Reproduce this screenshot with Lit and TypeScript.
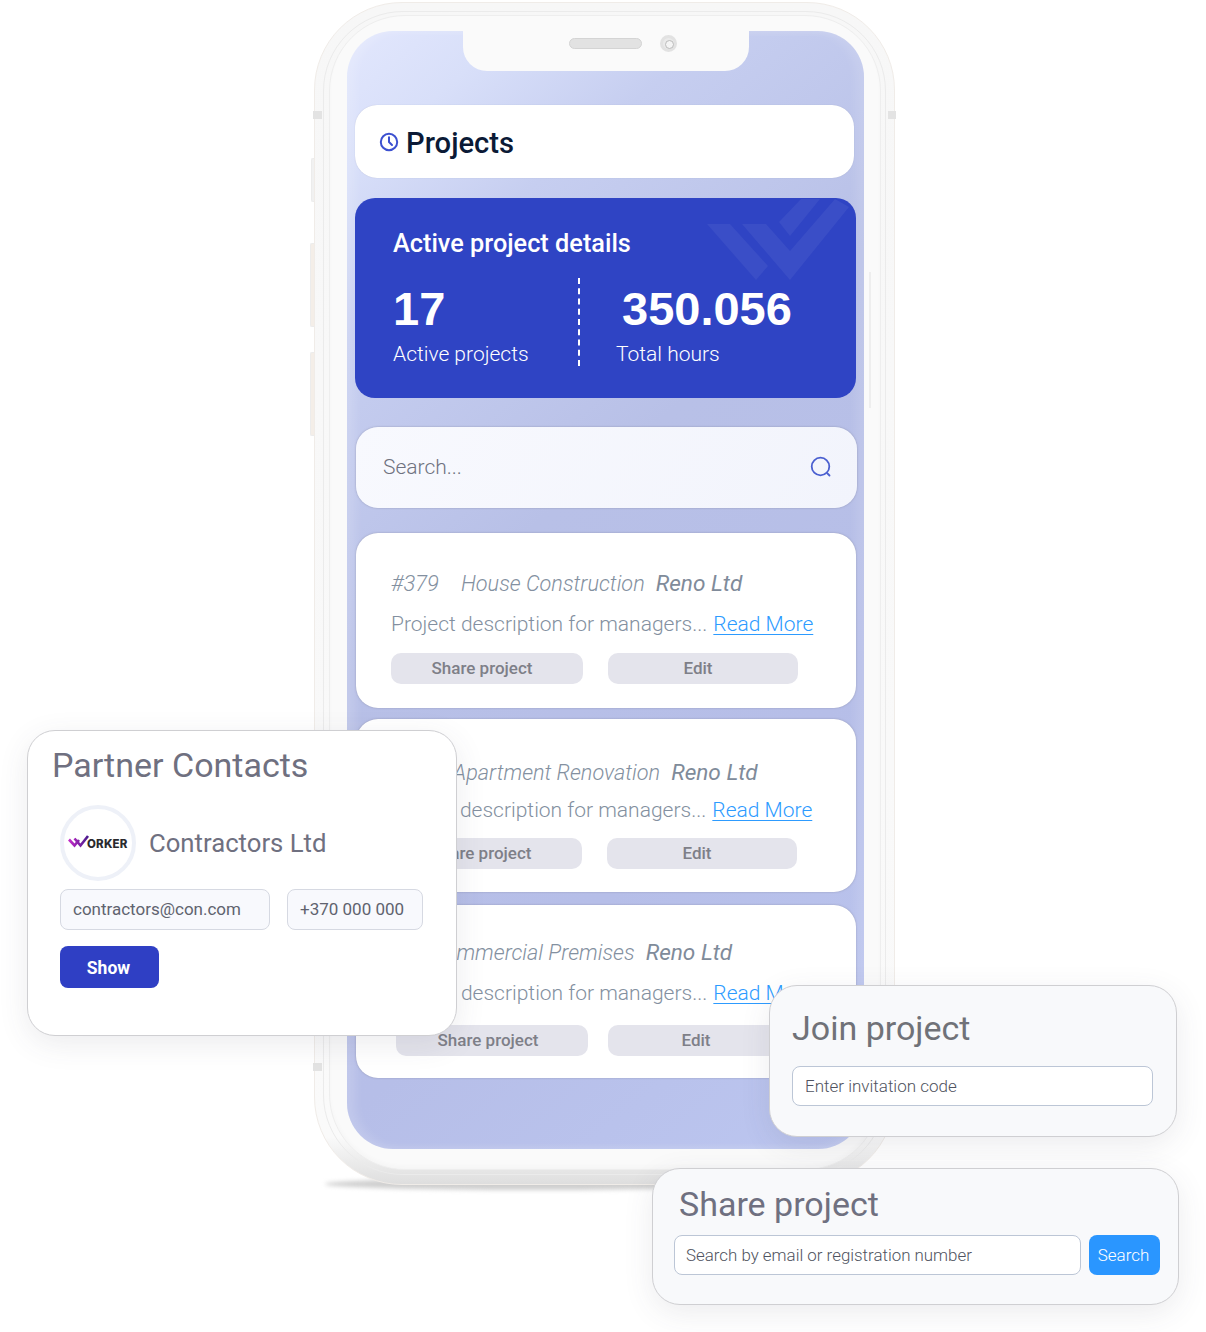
import { LitElement, html, css, svg } from "lit";
import { customElement } from "lit/decorators.js";

const projects = [
  { cls: "c1", no: "#379", name: "House Construction" },
  { cls: "c2", no: "", name: "Apartment Renovation" },
  { cls: "c3", no: "", name: "Commercial Premises" },
];

@customElement("app-root")
export class AppRoot extends LitElement {
  static styles = css`
    :host { display: block; font-family: Roboto, "Liberation Sans", sans-serif; }
    * { box-sizing: border-box; }
    .stage { position: relative; width: 1206px; height: 1332px; background: #fff; overflow: hidden; }

    /* phone */
    .ground { position: absolute; left: 325px; top: 1178px; width: 420px; height: 12px; border-radius: 50%;
      background: #cfcfcf; filter: blur(2px); }
    .phone { position: absolute; left: 314px; top: 2px; width: 581px; height: 1183px; border-radius: 88px;
      background: linear-gradient(180deg, #f7f7f7 0, #fafafa 96%, #dedede 100%);
      border: 1px solid #f0ece8; padding: 8px 8px 9px 8px; }
    .ring { height: 100%; border-radius: 80px; border: 1px solid #ebebeb; padding: 3px 4px 4px 5px; }
    .ring2 { height: 100%; border-radius: 76px; border: 1px solid #eeeeee; background: #fafafa;
      padding: 15px 16px 21px 17px; box-shadow: inset 0 -3px 4px rgba(0,0,0,.02); }
    .band { position: absolute; width: 9px; height: 8px; background: #e3e3e3; }
    .b1 { left: 313px; top: 111px; } .b2 { left: 888px; top: 111px; width: 8px; } .b3 { left: 313px; top: 1063px; }
    .side { position: absolute; width: 4px; background: #f1f1f1; border-radius: 2px 0 0 2px; border: 1px solid #ececec; border-right: 0; }
    .s1 { left: 311px; top: 158px; height: 44px; }
    .s2 { left: 310px; top: 243px; height: 84px; background: #f4eee8; }
    .s3 { left: 310px; top: 352px; height: 84px; background: #f4eee8; }
    .glint { position: absolute; left: 869px; top: 272px; width: 2px; height: 136px; background: #eeeeee; }

    .screen { position: relative; height: 1118px; border-radius: 46px; padding: 74px 7px 0 8px;
      background: linear-gradient(140deg, #e2e7fd 0%, #d8dff9 9%, #c6cef0 20%, #b8c0e7 42%, #b6bee8 70%, #bcc6f0 100%);
      box-shadow: inset 8px 0 10px rgba(255,255,255,.16), inset -8px 0 10px rgba(255,255,255,.12);
      display: flex; flex-direction: column; }
    .notch { position: absolute; left: 116px; top: 0; width: 286px; height: 40px; background: #fafafa;
      border-radius: 0 0 24px 24px; }
    .speaker { position: absolute; left: 106px; top: 7px; width: 73px; height: 11px; border-radius: 6px;
      background: #e2e2e2; border: 1px solid #d4d4d4; }
    .camera { position: absolute; left: 197px; top: 4px; width: 17px; height: 17px; border-radius: 50%;
      background: #eaeaea; border: 3px solid #e2e2e2; }
    .camera::after { content: ""; position: absolute; left: 2px; top: 2px; width: 7px; height: 7px; border-radius: 50%;
      background: #f4f4f4; border: 1px solid #bbb; }

    .head { width: 499px; height: 73px; background: #fff; border-radius: 22px; display: flex; align-items: center;
      padding-left: 24px; gap: 7px; box-shadow: 0 0 1px rgba(120,125,160,.4); }
    .head svg { width: 20px; height: 20px; }
    .head h1 { margin: 4px 0 0; font-size: 29.2px; font-weight: 500; color: #0b1a36; line-height: 1; }

    .blue { position: relative; overflow: hidden; width: 501px; height: 200px; margin-top: 20px; border-radius: 20px;
      background: #2f44c4; padding: 31px 38px 0; color: #fff; }
    .mark { position: absolute; left: 0; top: 0; width: 501px; height: 200px; }
    .blue h2 { margin: 0; font-size: 25.3px; font-weight: 500; line-height: 30px; }
    .stats { display: flex; margin-top: 19px; height: 88px; }
    .stat { display: flex; flex-direction: column; }
    .stat.a { width: 187px; border-right: 2px dashed #fff; }
    .stat.b { padding-left: 36px; }
    .num { font-family: "Liberation Sans", Arial, sans-serif; font-weight: 700; font-size: 47px; line-height: 50px; margin-top: 6px; }
    .stat.b .num { padding-left: 6px; }
    .lab { font-size: 21px; font-weight: 300; line-height: 26px; margin-top: 7px; }

    .search { width: 501px; height: 81px; margin: 29px 0 0 1px; border-radius: 22px;
      background: linear-gradient(120deg, #f8f9fe, #f2f4fc); box-shadow: 0 0 2px rgba(110,110,130,.55);
      display: flex; align-items: center; justify-content: space-between; padding: 0 25px 2px 27px; }
    .search span { font-size: 21px; font-weight: 300; color: #6f7280; }
    .search svg { width: 22px; height: 22px; margin-top: 1px; }

    .card { width: 500px; height: 173px; margin-left: 1px; background: #fff; border-radius: 22px;
      box-shadow: 0 0 2px rgba(110,110,130,.5); padding: var(--pt) 0 0 var(--pl); display: flex; flex-direction: column; }
    .c1 { --pt: 38px; --pl: 35px; --g1: 14px; --g2: 16px; --sw: 192px; --gap: 25px; --ew: 190px; --sl: 0px; --nx: 22px; --tp: 10px; height: 175px; margin-top: 25px; }
    .c2 { --pt: 41px; --pl: 34px; --g1: 11px; --g2: 15px; --sw: 192px; --gap: 25px; --ew: 190px; --sl: 0px; --nx: 63px; --tp: 10px; margin-top: 11px; }
    .c3 { --pt: 35px; --pl: 35px; --g1: 14px; --g2: 19px; --sw: 192px; --gap: 20px; --ew: 176px; --sl: 5px; --nx: 40px; --tp: 8px; margin-top: 13px; }
    .c3 .btn.e { padding-right: 0; }
    .title { display: flex; align-items: baseline; height: 26px; line-height: 26px; font-size: 21.7px; font-style: italic; font-weight: 300; color: #8390a0; white-space: nowrap; }
    .title .no { font-size: 22px; }
    .title .nm { margin-left: var(--nx); }
    .title b { font-weight: 400; font-size: 22.6px; margin-left: 11px; color: #808b9a; }
    .desc { margin-top: var(--g1); height: 26px; line-height: 26px; font-size: 21px; font-weight: 300; color: #8390a0; white-space: nowrap; }
    .desc a { color: #2d9bff; text-decoration: underline; text-underline-offset: 3px; text-decoration-thickness: 1px; margin-left: 1px; }
    .btns { margin-top: var(--g2); margin-left: var(--sl); display: flex; gap: var(--gap); }
    .btn { height: 31px; border-radius: 10px; background: #e4e4ec; color: #7e7f88; font-size: 17px; font-weight: 500;
      display: flex; align-items: center; justify-content: center; padding: 0 var(--tp) 2px 0; }
    .btn.s { width: var(--sw); }
    .btn.e { width: var(--ew); }

    /* floating panels */
    .panel { position: absolute; border: 1px solid #cfcfd2; border-radius: 28px; box-shadow: 0 8px 30px rgba(70,70,90,.10); }
    .partner { left: 27px; top: 730px; width: 430px; height: 306px; background: #fff; padding: 13px 25px 0 32px; }
    .partner h3 { margin: 0 0 0 -8px; font-size: 34px; font-weight: 400; line-height: 42px; color: #6f7080; }
    .who { display: flex; align-items: center; gap: 13px; margin-top: 19px; }
    .avatar { width: 76px; height: 76px; border-radius: 50%; border: 4px solid #eef1f8; position: relative; flex: none; }
    .avatar svg { position: absolute; left: 4px; top: 25px; width: 24px; height: 16px; }
    .avatar span { position: absolute; left: 23px; top: 29px; font-family: Inter, "Liberation Sans", sans-serif; font-weight: 800; font-size: 11.5px; line-height: 13px; color: #2a2a2e; letter-spacing: .2px; }
    .who .name { font-size: 25.7px; color: #6f7080; }
    .row { display: flex; gap: 17px; margin-top: 8px; }
    .field { height: 41px; border-radius: 8px; background: #f8f9fd; border: 1px solid #d6d9e2; font-size: 17px; color: #60636f;
      display: flex; align-items: center; padding: 0 0 2px 12px; white-space: nowrap; }
    .field.m { width: 210px; }
    .field.p { width: 136px; }
    .show { margin-top: 16px; width: 99px; height: 42px; background: #2f3fc4; color: #fff; border-radius: 8px; font-size: 17.5px; font-weight: 700;
      display: flex; align-items: center; justify-content: center; padding: 1px 2px 0 0; }

    .join { left: 769px; top: 985px; width: 408px; height: 152px; background: #f8f9fb; padding: 20px 23px 0 22px; }
    .share { left: 652px; top: 1168px; width: 527px; height: 137px; background: #f8f9fb; padding: 13px 18px 0 21px; }
    .panel h4 { margin: 0; font-size: 34px; font-weight: 400; line-height: 44px; color: #707278; }
    .share h4 { margin-left: 5px; color: #6f7080; }
    .input { height: 40px; border-radius: 8px; background: #fff; border: 1px solid #bcc6d6; font-size: 17px; font-weight: 300; color: #4f5360;
      display: flex; align-items: center; padding-left: 12px; }
    .join .input { width: 361px; margin-top: 16px; }
    .srow { display: flex; gap: 8px; margin-top: 9px; }
    .share .input { width: 407px; font-size: 16.9px; padding-left: 11px; }
    .go { width: 71px; height: 40px; border-radius: 8px; background: #2a96ff; color: #fff; font-size: 17px; font-weight: 300;
      display: flex; align-items: center; justify-content: center; padding-right: 2px; }
  `;

  private card(p: { cls: string; no: string; name: string }) {
    return html`<div class="card ${p.cls}">
      <div class="title">${p.no ? html`<span class="no">${p.no}</span>` : ""}<span class="nm">${p.name}</span><b>Reno Ltd</b></div>
      <div class="desc">Project description for managers... <a>Read More</a></div>
      <div class="btns"><div class="btn s">Share project</div><div class="btn e">Edit</div></div>
    </div>`;
  }

  render() {
    return html`<div class="stage">
      <div class="ground"></div>
      <div class="side s1"></div><div class="side s2"></div><div class="side s3"></div>
      <div class="phone"><div class="ring"><div class="ring2">
        <div class="screen">
          <div class="notch"><div class="speaker"></div><div class="camera"></div></div>
          <div class="head">
            <svg viewBox="0 0 20 20" fill="none" stroke="#3c50d0" stroke-width="2" stroke-linecap="round" stroke-linejoin="round"><circle cx="10" cy="10" r="8.2"/><path d="M10 5.2V10l3 3"/></svg>
            <h1>Projects</h1>
          </div>
          <div class="blue">
            <svg class="mark" viewBox="0 0 501 200" fill="#fff" fill-opacity=".055">
              <polygon points="352,26 375,26 413,68 401,82"/>
              <polygon points="387,26 411,26 435,53 480,1 494,9 435,82"/>
              <polygon points="424,24 446,1 465,1 435,38"/>
            </svg>
            <h2>Active project details</h2>
            <div class="stats">
              <div class="stat a"><div class="num">17</div><div class="lab">Active projects</div></div>
              <div class="stat b"><div class="num">350.056</div><div class="lab">Total hours</div></div>
            </div>
          </div>
          <div class="search"><span>Search...</span>
            <svg viewBox="0 0 22 22" fill="none" stroke="#4a5fd0" stroke-width="1.8" stroke-linecap="round"><circle cx="10.5" cy="10.5" r="8.8"/><path d="M17.5 17.5l2 2"/></svg>
          </div>
          ${projects.map((p) => this.card(p))}
        </div>
      </div></div></div>
      <div class="band b1"></div><div class="band b2"></div><div class="band b3"></div>
      <div class="glint"></div>

      <div class="panel partner">
        <h3>Partner Contacts</h3>
        <div class="who">
          <div class="avatar">
            <svg viewBox="0 0 24 16" fill="none" stroke-width="2.6">
              <defs><linearGradient id="wg" x1="0" x2="1" y1="0" y2="0"><stop offset="0" stop-color="#c22ac8"/><stop offset="1" stop-color="#4a1a8c"/></linearGradient></defs>
              ${svg`<path d="M1 5.5L6.5 11.5L11 6M6.5 4.5L12.5 11.5L20 2" stroke="url(#wg)"/>`}
            </svg>
            <span>ORKER</span>
          </div>
          <div class="name">Contractors Ltd</div>
        </div>
        <div class="row"><div class="field m">contractors@con.com</div><div class="field p">+370 000 000</div></div>
        <div class="show">Show</div>
      </div>

      <div class="panel join">
        <h4>Join project</h4>
        <div class="input">Enter invitation code</div>
      </div>
      <div class="panel share">
        <h4>Share project</h4>
        <div class="srow"><div class="input">Search by email or registration number</div><div class="go">Search</div></div>
      </div>
    </div>`;
  }
}
